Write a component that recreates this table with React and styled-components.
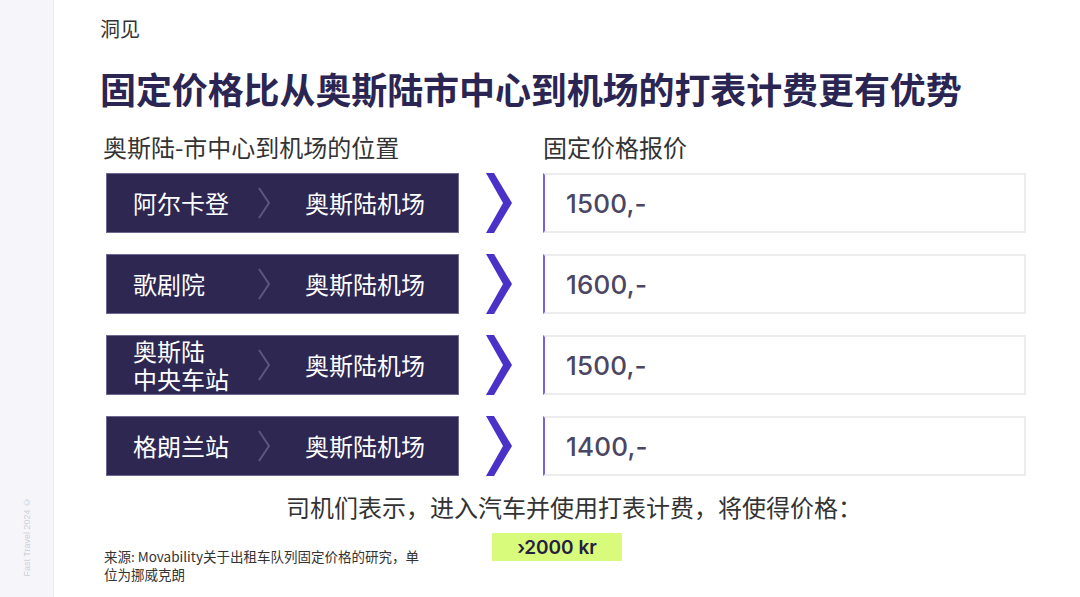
import React from "react";
import styled, { createGlobalStyle } from "styled-components";

const GlobalStyle = createGlobalStyle`
  html, body {
    margin: 0;
    padding: 0;
    background: #fff;
  }
  body {
    font-family: "Noto Sans CJK SC", "Noto Sans", sans-serif;
  }
`;

const Page = styled.div`
  display: flex;
  width: 1080px;
  height: 597px;
  overflow: hidden;
`;

const Sidebar = styled.aside`
  width: 54px;
  flex: none;
  background: #f6f6fa;
  border-right: 1px solid #e9e9f1;
  display: flex;
  flex-direction: column;
  justify-content: flex-end;
  align-items: center;
  padding-bottom: 20px;
  box-sizing: border-box;
`;

const Copyright = styled.span`
  writing-mode: vertical-rl;
  transform: rotate(180deg);
  font-family: "Liberation Sans", Arial, sans-serif;
  font-size: 9px;
  color: #cfcfd6;
  white-space: nowrap;
`;

const Main = styled.main`
  flex: 1;
  padding: 15px 0 0 46px;
  display: flex;
  flex-direction: column;
`;

const Kicker = styled.div`
  font-size: 20px;
  line-height: 28px;
  color: #333;
`;

const Title = styled.h1`
  margin: 20px 0 0 0;
  font-size: 36px;
  line-height: 50px;
  font-weight: 700;
  color: #2b2553;
  letter-spacing: -0.1px;
`;

const Grid = styled.div`
  display: grid;
  grid-template-columns: 353px 84px 483px;
  row-gap: 21px;
  margin-top: 17px;
  margin-left: 6px;
`;

const ColHead = styled.div`
  font-size: 24px;
  line-height: 34px;
  color: #333;
  margin-left: ${(p) => p.$shift || 0}px;
  margin-bottom: -12px;
`;

const Route = styled.div`
  height: 60px;
  background: #2d2752;
  border: 1px solid #6e6892;
  box-sizing: border-box;
  display: grid;
  grid-template-columns: 124px 14px 1fr;
  align-items: center;
  padding-left: 26px;
  color: #fff;
  font-size: 24px;
  line-height: 28px;
`;

const From = styled.span`
  white-space: pre-line;
`;

const To = styled.span`
  margin-left: 34px;
`;

const Arrow = styled.div`
  display: flex;
  align-items: center;
  justify-content: center;
  padding-right: 4px;
`;

const Price = styled.div`
  height: 60px;
  border: 2px solid #ececef;
  border-left: 2px solid #7661e6;
  box-sizing: border-box;
  display: flex;
  align-items: center;
  padding-left: 21px;
  font-family: "Inter", "Noto Sans", sans-serif;
  font-size: 26px;
  font-weight: 500;
  color: #4b4663;
  letter-spacing: 0.2px;
`;

const Note = styled.div`
  margin-top: 14px;
  width: 920px;
  margin-left: 14px;
  text-align: center;
  font-size: 24px;
  line-height: 34px;
  color: #333;
`;

const Footer = styled.div`
  display: flex;
  align-items: flex-start;
  margin-top: 7px;
`;

const Source = styled.div`
  width: 322px;
  padding-top: 16px;
  margin-left: 4px;
  font-size: 13.5px;
  line-height: 18px;
  color: #333;
`;

const Badge = styled.div`
  margin: 2px 0 0 66px;
  width: 130px;
  height: 28px;
  background: #d8fb7c;
  display: flex;
  align-items: center;
  justify-content: center;
  font-family: "Inter", "Noto Sans", sans-serif;
  font-size: 19px;
  font-weight: 600;
  color: #24203f;
`;

const SmallChevron = () => (
  <svg width="14" height="32" viewBox="0 0 14 32">
    <polyline points="2,1 12,16 2,31" fill="none" stroke="#5c5780" strokeWidth="2" />
  </svg>
);

const BigChevron = () => (
  <svg width="26" height="60" viewBox="0 0 26 60">
    <polygon points="0,0 8,0 26,30 8,60 0,60 17,30" fill="#4a32c8" />
  </svg>
);

const rows = [
  { from: "阿尔卡登", price: "1500,-" },
  { from: "歌剧院", price: "1600,-" },
  { from: "奥斯陆\n中央车站", price: "1500,-" },
  { from: "格朗兰站", price: "1400,-" },
];

export default function App() {
  return (
    <Page>
      <GlobalStyle />
      <Sidebar>
        <Copyright>Fast Travel 2024 ©</Copyright>
      </Sidebar>
      <Main>
        <Kicker>洞见</Kicker>
        <Title>固定价格比从奥斯陆市中心到机场的打表计费更有优势</Title>
        <Grid>
          <ColHead $shift={-3}>奥斯陆-市中心到机场的位置</ColHead>
          <div />
          <ColHead>固定价格报价</ColHead>
          {rows.map((r) => (
            <React.Fragment key={r.from}>
              <Route>
                <From>{r.from}</From>
                <SmallChevron />
                <To>奥斯陆机场</To>
              </Route>
              <Arrow>
                <BigChevron />
              </Arrow>
              <Price>{r.price}</Price>
            </React.Fragment>
          ))}
        </Grid>
        <Note>司机们表示，进入汽车并使用打表计费，将使得价格：</Note>
        <Footer>
          <Source>来源: Movability关于出租车队列固定价格的研究，单位为挪威克朗</Source>
          <Badge>›2000 kr</Badge>
        </Footer>
      </Main>
    </Page>
  );
}
